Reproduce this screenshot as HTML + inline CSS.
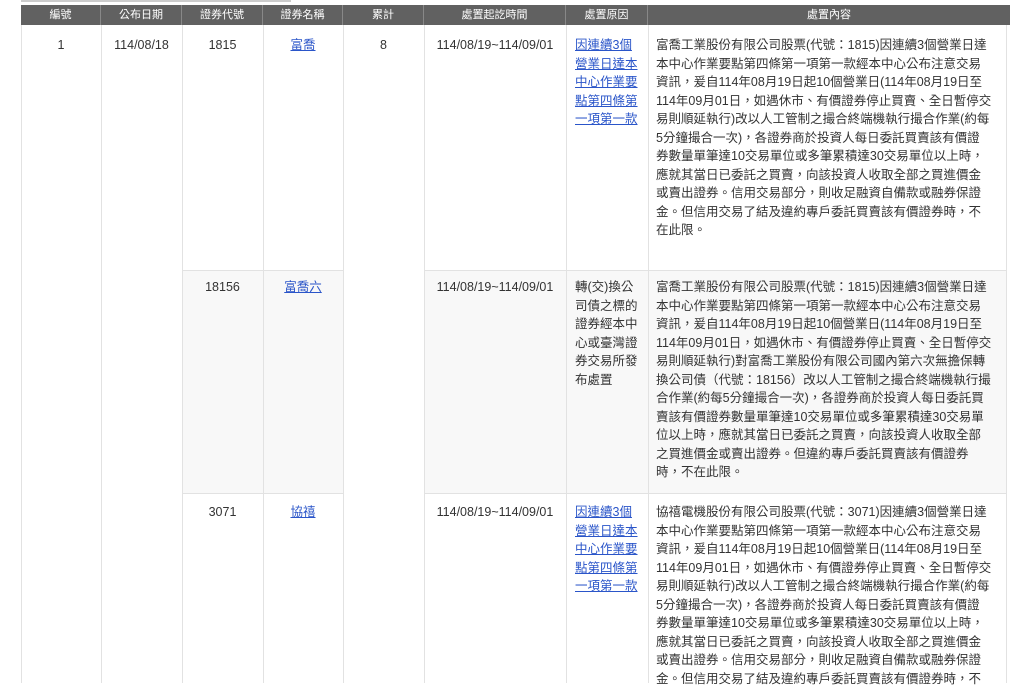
<!DOCTYPE html>
<html><head><meta charset="utf-8"><style>
body{margin:0;width:1024px;height:683px;overflow:hidden;background:#fff;position:relative;font-family:"Liberation Sans","Noto Sans CJK TC",sans-serif;color:#333;font-size:12.5px}
.a{position:absolute}
.h{position:absolute;top:5px;height:20px;background:#616161;color:#fff;font-size:11px;line-height:20px;text-align:center;border-right:1px solid #888;box-sizing:border-box}
.v{position:absolute;width:1px;background:#e2e2e2}
.hl{position:absolute;height:1px;background:#e2e2e2}
.t{position:absolute;line-height:18.5px;white-space:nowrap}
.c{text-align:center}
a{color:#2a55c9;text-decoration:underline}
.g{position:absolute;background:#f8f8f8}
</style></head><body>
<div class="a" style="left:21px;top:0;width:270px;height:2px;background:#ccc"></div>
<div class="h" style="left:21px;width:80px">編號</div>
<div class="h" style="left:101px;width:81px">公布日期</div>
<div class="h" style="left:182px;width:81px">證券代號</div>
<div class="h" style="left:263px;width:80px">證券名稱</div>
<div class="h" style="left:343px;width:81px">累計</div>
<div class="h" style="left:424px;width:142px">處置起訖時間</div>
<div class="h" style="left:566px;width:82px">處置原因</div>
<div class="h" style="left:648px;width:362px;border-right:none">處置內容</div>

<div class="g" style="left:182px;top:270px;width:161px;height:223px"></div>
<div class="g" style="left:424px;top:270px;width:583px;height:223px"></div>

<div class="v" style="left:21px;top:25px;height:658px"></div>
<div class="v" style="left:101px;top:25px;height:658px"></div>
<div class="v" style="left:182px;top:25px;height:658px"></div>
<div class="v" style="left:263px;top:25px;height:658px"></div>
<div class="v" style="left:343px;top:25px;height:658px"></div>
<div class="v" style="left:424px;top:25px;height:658px"></div>
<div class="v" style="left:566px;top:25px;height:658px"></div>
<div class="v" style="left:648px;top:25px;height:658px"></div>
<div class="v" style="left:1006px;top:25px;height:658px"></div>
<div class="hl" style="left:182px;top:270px;width:161px"></div>
<div class="hl" style="left:424px;top:270px;width:583px"></div>
<div class="hl" style="left:182px;top:493px;width:161px"></div>
<div class="hl" style="left:424px;top:493px;width:583px"></div>

<div class="t c" style="left:21px;width:80px;top:36px">1</div>
<div class="t c" style="left:101px;width:81px;top:36px">114/08/18</div>
<div class="t c" style="left:343px;width:81px;top:36px">8</div>

<div class="t c" style="left:182px;width:81px;top:36px">1815</div>
<div class="t c" style="left:263px;width:80px;top:36px"><a>富喬</a></div>
<div class="t c" style="left:424px;width:142px;top:36px">114/08/19~114/09/01</div>
<div class="t" style="left:575px;top:36px"><a>因連續3個</a><br><a>營業日達本</a><br><a>中心作業要</a><br><a>點第四條第</a><br><a>一項第一款</a></div>
<div class="t" style="left:656px;top:36px">富喬工業股份有限公司股票(代號：1815)因連續3個營業日達<br>本中心作業要點第四條第一項第一款經本中心公布注意交易<br>資訊，爰自114年08月19日起10個營業日(114年08月19日至<br>114年09月01日，如遇休市、有價證券停止買賣、全日暫停交<br>易則順延執行)改以人工管制之撮合終端機執行撮合作業(約每<br>5分鐘撮合一次)，各證券商於投資人每日委託買賣該有價證<br>券數量單筆達10交易單位或多筆累積達30交易單位以上時，<br>應就其當日已委託之買賣，向該投資人收取全部之買進價金<br>或賣出證券。信用交易部分，則收足融資自備款或融券保證<br>金。但信用交易了結及違約專戶委託買賣該有價證券時，不<br>在此限。</div>

<div class="t c" style="left:182px;width:81px;top:278px">18156</div>
<div class="t c" style="left:263px;width:80px;top:278px"><a>富喬六</a></div>
<div class="t c" style="left:424px;width:142px;top:278px">114/08/19~114/09/01</div>
<div class="t" style="left:575px;top:278px">轉(交)換公<br>司債之標的<br>證券經本中<br>心或臺灣證<br>券交易所發<br>布處置</div>
<div class="t" style="left:656px;top:278px">富喬工業股份有限公司股票(代號：1815)因連續3個營業日達<br>本中心作業要點第四條第一項第一款經本中心公布注意交易<br>資訊，爰自114年08月19日起10個營業日(114年08月19日至<br>114年09月01日，如遇休市、有價證券停止買賣、全日暫停交<br>易則順延執行)對富喬工業股份有限公司國內第六次無擔保轉<br>換公司債（代號：18156）改以人工管制之撮合終端機執行撮<br>合作業(約每5分鐘撮合一次)，各證券商於投資人每日委託買<br>賣該有價證券數量單筆達10交易單位或多筆累積達30交易單<br>位以上時，應就其當日已委託之買賣，向該投資人收取全部<br>之買進價金或賣出證券。但違約專戶委託買賣該有價證券<br>時，不在此限。</div>

<div class="t c" style="left:182px;width:81px;top:503px">3071</div>
<div class="t c" style="left:263px;width:80px;top:503px"><a>協禧</a></div>
<div class="t c" style="left:424px;width:142px;top:503px">114/08/19~114/09/01</div>
<div class="t" style="left:575px;top:503px"><a>因連續3個</a><br><a>營業日達本</a><br><a>中心作業要</a><br><a>點第四條第</a><br><a>一項第一款</a></div>
<div class="t" style="left:656px;top:503px">協禧電機股份有限公司股票(代號：3071)因連續3個營業日達<br>本中心作業要點第四條第一項第一款經本中心公布注意交易<br>資訊，爰自114年08月19日起10個營業日(114年08月19日至<br>114年09月01日，如遇休市、有價證券停止買賣、全日暫停交<br>易則順延執行)改以人工管制之撮合終端機執行撮合作業(約每<br>5分鐘撮合一次)，各證券商於投資人每日委託買賣該有價證<br>券數量單筆達10交易單位或多筆累積達30交易單位以上時，<br>應就其當日已委託之買賣，向該投資人收取全部之買進價金<br>或賣出證券。信用交易部分，則收足融資自備款或融券保證<br>金。但信用交易了結及違約專戶委託買賣該有價證券時，不</div>
</body></html>
